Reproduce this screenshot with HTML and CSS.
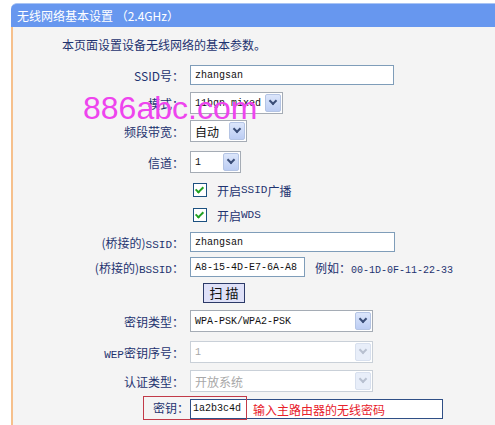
FILE: index.html
```html
<!DOCTYPE html>
<html lang="zh-CN">
<head>
    <meta charset="UTF-8">
    <title>无线网络基本设置</title>
    <link rel="stylesheet" href="styles.css">
</head>
<body>
    <div class="page">
        <div class="title">无线网络基本设置 （2.4GHz）</div>
        <div class="panel">
            <p class="intro">本页面设置设备无线网络的基本参数。</p>

            <div class="row h28">
                <span class="label">SSID号：</span>
                <span class="field"><span class="input w204">zhangsan</span></span>
            </div>
            <div class="row h28">
                <span class="label">模式：</span>
                <span class="field"><span class="select w93">11bgn mixed<span class="arrow"></span></span></span>
            </div>
            <div class="row h28">
                <span class="label">频段带宽：</span>
                <span class="field"><span class="select w57 cjk">自动<span class="arrow"></span></span></span>
            </div>
            <div class="row h34">
                <span class="label">信道：</span>
                <span class="field"><span class="select w51">1<span class="arrow"></span></span></span>
            </div>
            <div class="row h22">
                <span class="label"></span>
                <span class="field"><span class="check"></span>开启<span class="mono">SSID</span>广播</span>
            </div>
            <div class="row h28">
                <span class="label"></span>
                <span class="field"><span class="check"></span>开启<span class="mono">WDS</span></span>
            </div>
            <div class="row h26">
                <span class="label">(桥接的)<span class="mono">SSID</span>：</span>
                <span class="field"><span class="input w205">zhangsan</span></span>
            </div>
            <div class="row h24">
                <span class="label">(桥接的)<span class="mono">BSSID</span>：</span>
                <span class="field"><span class="input w115">A8-15-4D-E7-6A-A8</span><span class="hint">例如：<span class="mono">00-1D-0F-11-22-33</span></span></span>
            </div>
            <div class="row h28">
                <span class="label"></span>
                <span class="field"><button class="scan">扫 描</button></span>
            </div>
            <div class="row h28">
                <span class="label">密钥类型：</span>
                <span class="field"><span class="select w183">WPA-PSK/WPA2-PSK<span class="arrow"></span></span></span>
            </div>
            <div class="row h34">
                <span class="label"><span class="mono">WEP</span>密钥序号：</span>
                <span class="field"><span class="select w183 disabled">1<span class="arrow"></span></span></span>
            </div>
            <div class="row h24">
                <span class="label">认证类型：</span>
                <span class="field"><span class="select w183 disabled cjk">开放系统<span class="arrow"></span></span></span>
            </div>
            <div class="row h32">
                <span class="label"></span>
                <span class="field">
                    <span class="key-box">
                        <span class="key-mark"><span class="key-label">密钥：</span><span class="key-input">1a2b3c4d</span></span><span class="key-note">输入主路由器的无线密码</span>
                    </span>
                </span>
            </div>
        </div>
        <div class="watermark">886abc.com</div>
    </div>
</body>
</html>
```

FILE: styles.css
```css
body {
    margin: 0;
    background: #ffffff;
    font-family: "Noto Sans CJK SC", "Liberation Sans", sans-serif;
    font-size: 12px;
    color: #1e3370;
}
.page {
    position: relative;
    width: 495px;
    height: 425px;
    overflow: hidden;
    padding-top: 3px;
    box-sizing: border-box;
}
.title {
    margin-left: 11px;
    height: 24px;
    line-height: 24px;
    padding-left: 6px;
    background: #6797ef;
    color: #ffffff;
    font-size: 12px;
    border-top-left-radius: 6px;
    border-top: 1px solid #a9c4f4;
    box-sizing: border-box;
}
.panel {
    margin-left: 11px;
    border-left: 2px solid #f6c08c;
    background: #f4f4f4;
    padding-top: 8px;
    height: 420px;
}
.intro {
    margin: 0 0 6px 49px;
    height: 20px;
    line-height: 20px;
    font-size: 12px;
}
.row {
    display: flex;
    align-items: center;
    white-space: nowrap;
}
.h22 { height: 22px; }
.h24 { height: 24px; }
.h26 { height: 26px; }
.h28 { height: 28px; }
.h32 { height: 32px; }
.h34 { height: 34px; }
.label {
    width: 171px;
    text-align: right;
    font-size: 12px;
    color: #1e3370;
    flex-shrink: 0;
}
.field {
    margin-left: 6px;
    display: flex;
    align-items: center;
    font-size: 12px;
}
.mono {
    font-family: "Liberation Mono", monospace;
    font-size: 11px;
}
.input,
.select {
    display: inline-flex;
    align-items: center;
    height: 20px;
    box-sizing: border-box;
    padding-left: 4px;
    background: #ffffff;
    border: 1px solid #7f9db9;
    font-family: "Liberation Mono", monospace;
    font-size: 10px;
    color: #111111;
    white-space: nowrap;
}
.select {
    position: relative;
    height: 22px;
    border-color: #a5acb5;
}
.cjk {
    font-family: "Noto Sans CJK SC", sans-serif;
    font-size: 12px;
}
.arrow {
    position: absolute;
    right: 1px;
    top: 1px;
    width: 16px;
    height: 18px;
    box-sizing: border-box;
    border: 1px solid #b4c4e4;
    border-radius: 2px;
    background: linear-gradient(#dce6fb, #bccdf3);
}
.arrow::after {
    content: "";
    position: absolute;
    left: 4px;
    top: 3px;
    width: 4px;
    height: 4px;
    border-right: 2px solid #3a4d77;
    border-bottom: 2px solid #3a4d77;
    transform: rotate(45deg);
}
.select.disabled {
    color: #a8a8a8;
    border-color: #c9d0d8;
}
.select.disabled .arrow {
    background: #e8eef9;
    border-color: #d8e0ee;
}
.select.disabled .arrow::after {
    border-color: #b8c0d0;
}
.w51 { width: 51px; }
.w57 { width: 57px; }
.w93 { width: 93px; }
.w115 { width: 115px; }
.w183 { width: 183px; }
.w204 { width: 204px; }
.w205 { width: 205px; }
.check {
    width: 12px;
    height: 12px;
    margin: 0 10px 0 3px;
    border: 1px solid #1c5180;
    background: #ffffff;
    position: relative;
}
.check::after {
    content: "";
    position: absolute;
    left: 3px;
    top: 1px;
    width: 3px;
    height: 6px;
    border-right: 2px solid #21a121;
    border-bottom: 2px solid #21a121;
    transform: rotate(45deg);
}
.hint {
    margin-left: 10px;
    color: #1e3370;
}
.hint .mono {
    font-size: 10px;
}
.scan {
    margin-left: 13px;
    height: 20px;
    width: 42px;
    padding: 0;
    border: 1px solid #2c3a68;
    background: #dfe1f8;
    color: #111111;
    font-family: "Noto Sans CJK SC", sans-serif;
    font-size: 13px;
    line-height: 18px;
}
.key-box {
    position: relative;
    display: flex;
    align-items: center;
    width: 253px;
    height: 20px;
    box-sizing: border-box;
    border: 1px solid #2f4f86;
    background: #ffffff;
}
.key-mark {
    position: absolute;
    left: -48px;
    top: -4px;
    width: 104px;
    height: 24px;
    box-sizing: border-box;
    border: 1px solid #c23a48;
    display: flex;
    align-items: center;
}
.key-label {
    width: 45px;
    text-align: right;
    font-size: 12px;
    color: #1e3370;
    background: #f4f4f4;
    height: 22px;
    line-height: 22px;
}
.key-input {
    padding-left: 4px;
    font-family: "Liberation Mono", monospace;
    font-size: 10px;
    color: #111111;
}
.key-note {
    margin-left: 62px;
    color: #e8202a;
    font-size: 12px;
}
.watermark {
    position: absolute;
    left: 83px;
    top: 88px;
    font-family: "Liberation Sans", Arial, sans-serif;
    font-size: 32px;
    color: #ee44ee;
    line-height: 40px;
}
```
